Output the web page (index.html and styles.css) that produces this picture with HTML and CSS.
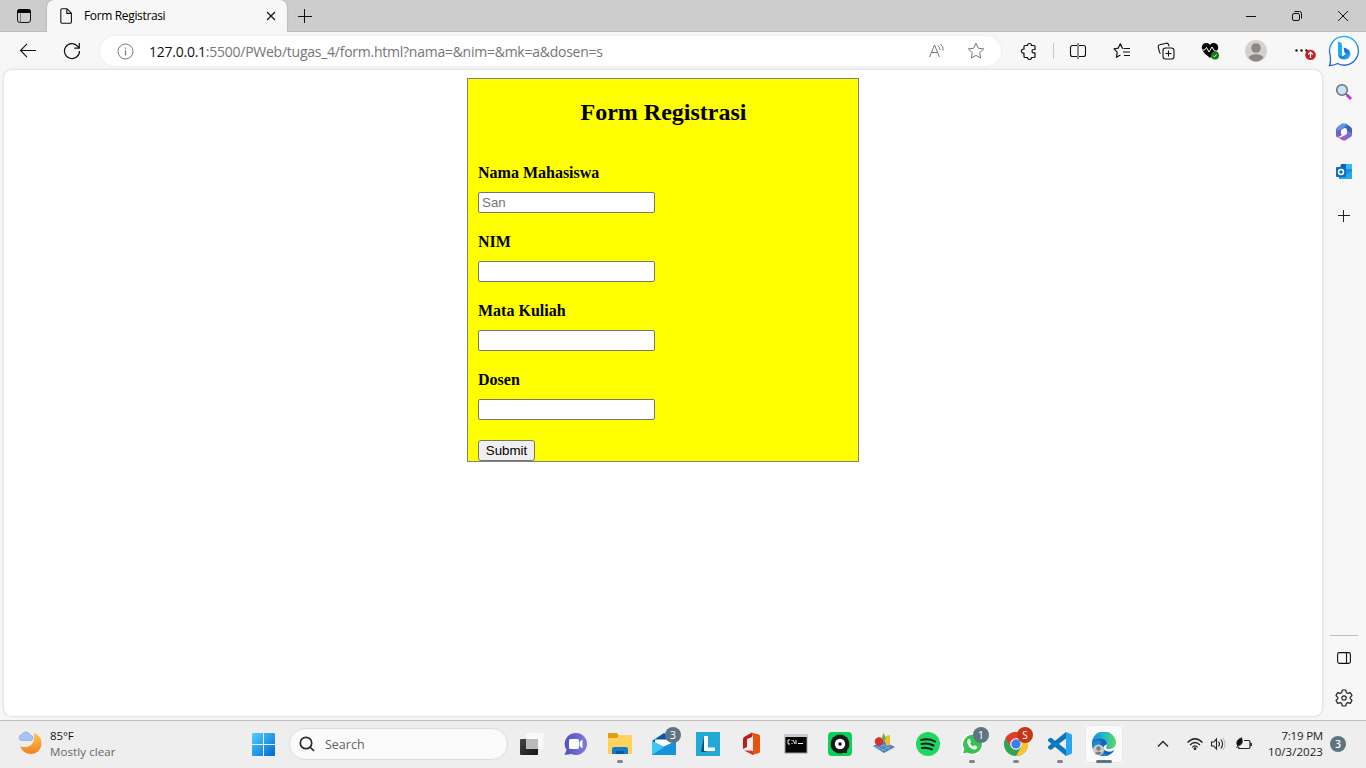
FILE: index.html
```html
<!DOCTYPE html>
<html lang="en">
<head>
<meta charset="utf-8">
<title>Form Registrasi</title>
<link rel="stylesheet" href="styles.css">
</head>
<body>
<div class="desktop">
  <header class="titlebar">
    <div class="workspace"><svg width="16" height="16" viewBox="0 0 16 16"><rect x="1.500" y="1.500" width="13" height="13" rx="2.500" fill="none" stroke="#111"/><path d="M1 5V4a3 3 0 0 1 3-3h8a3 3 0 0 1 3 3v1z"/><path d="M4.500 5v9.500" stroke="#777"/></svg></div>
    <div class="tab">
      <svg width="14" height="16" viewBox="0 0 14 16" fill="none" stroke="#111" stroke-width="1.100"><path d="M3 .8h5l4.400 4.400V14a1.200 1.200 0 0 1-1.200 1.200H3A1.200 1.200 0 0 1 1.800 14V2A1.200 1.200 0 0 1 3 .8zM7.800.8v4.600h4.600"/></svg>
      <span class="tab-title">Form Registrasi</span>
      <svg class="tab-close" width="10" height="10" viewBox="0 0 10 10" stroke="#111" stroke-width="1.200"><path d="M1 1l8 8M9 1L1 9"/></svg>
    </div>
    <svg class="new-tab" width="14" height="14" viewBox="0 0 14 14" stroke="#111"><path d="M0 7.500h14M6.500 0v14"/></svg>
    <div class="window-buttons">
      <svg width="12" height="12" viewBox="0 0 12 12" stroke="#111"><path d="M1 6.500h10"/></svg>
      <svg width="12" height="12" viewBox="0 0 12 12" stroke="#111" fill="none"><rect x="1.500" y="3.500" width="7" height="7" rx="1.500"/><path d="M3.500 1.500h5a2 2 0 0 1 2 2v5"/></svg>
      <svg width="12" height="12" viewBox="0 0 12 12" stroke="#111"><path d="M1 1l10 10M11 1L1 11"/></svg>
    </div>
  </header>

  <div class="browser">
    <div class="main">
      <nav class="toolbar">
        <div class="tool"><svg width="18" height="16" viewBox="0 0 18 16" fill="none" stroke="#111" stroke-width="1.100"><path d="M8 .8L1.500 7.500 8 14.200M1.500 7.500H17"/></svg></div>
        <div class="tool"><svg width="18" height="18" viewBox="0 0 18 18" fill="none" stroke="#111" stroke-width="1.200"><path d="M16.500 9A7.500 7.500 0 1 1 14.800 4.300L16 6M16.300 1v5.200h-5"/></svg></div>
        <div class="address">
          <svg width="17" height="17" viewBox="0 0 17 17" fill="none" stroke="#777"><circle cx="8.500" cy="8.500" r="7.500"/><path d="M8.500 7.500v5M8.500 4.500v1.300" stroke-width="1.200"/></svg>
          <span class="url"><b>127.0.0.1</b>:5500/PWeb/tugas_4/form.html?nama=&amp;nim=&amp;mk=a&amp;dosen=s</span>
          <svg class="read" width="17" height="16" viewBox="0 0 17 16" fill="none" stroke="#777"><path d="M1.500 14L6.500 2l5 12M3.200 9.500h6.600M10 2.500q2 1.500 2 4.500M12.500 1q3.300 2.500 2.500 6.500"/></svg>
          <svg width="18" height="18" viewBox="0 0 18 18" fill="none" stroke="#777" stroke-linejoin="round"><path d="M9 1.300l2.300 4.900 5.400.7-4 3.700 1 5.400L9 13.400 4.300 16l1-5.400-4-3.700 5.400-.7z"/></svg>
        </div>
        <div class="tool ext"><svg width="18" height="18" viewBox="0 0 18 18" fill="none" stroke="#111" stroke-width="1.200" stroke-linejoin="round"><path d="M5 3.500h2.500a2 2 0 0 1 4 0h2.500a1 1 0 0 1 1 1v3h-1.300a1.700 1.700 0 0 0 0 3.400h1.300v3.600a1 1 0 0 1-1 1h-2.500a2 2 0 0 1-4 0H5a1 1 0 0 1-1-1v-3.300h-.6a2 2 0 0 1 0-4H4v-2.700a1 1 0 0 1 1-1z"/></svg></div>
        <i class="divider"></i>
        <div class="tool"><svg width="18" height="16" viewBox="0 0 18 16" fill="none" stroke="#111" stroke-width="1.100"><path d="M8 2.500H3.500a2 2 0 0 0-2 2v7a2 2 0 0 0 2 2H8M10 2.500h4.500a2 2 0 0 1 2 2v7a2 2 0 0 1-2 2H10"/><path d="M9 0v16" stroke="#555" stroke-width="1.300"/></svg></div>
        <div class="tool"><svg width="18" height="18" viewBox="0 0 18 18" fill="none" stroke="#111" stroke-width="1.200" stroke-linejoin="round"><path d="M10 6.200H9.400L7.300 1.800 5.200 6.200l-4.200.7 3.200 3.200-.8 5.200 4-2.300M10.500 6.500h6.500M10 10h7M11 13.500h6"/></svg></div>
        <div class="tool"><svg width="18" height="18" viewBox="0 0 18 18" fill="none" stroke="#111" stroke-width="1.100"><rect x="6" y="6" width="11" height="11" rx="2.500"/><path d="M11.500 8.500v6M8.500 11.500h6M3.600 11.500A2 2 0 0 1 2.500 10L1.200 5A2 2 0 0 1 2.700 2.800l6.500-1.600a2 2 0 0 1 2.300 1.300l.6 1.800"/></svg></div>
        <div class="tool"><svg width="18" height="18" viewBox="0 0 18 18"><path d="M9 3C7 0 2 .5 1 4c-1.300 5 4 8.500 8 12 4-3.500 9.300-7 8-12-1-3.500-6-4-8-1z" fill="#080808"/><path d="M0 8h3.500l2-2.500L8 10l3-5 2.500 4H18" fill="none" stroke="#fff" stroke-width="1"/><circle cx="14" cy="13.500" r="4" fill="#107c10"/><path d="M12.300 13.700l1.200 1.200 2.200-2.600" stroke="#d7f3d7" fill="none"/></svg></div>
        <div class="tool profile"><svg width="22" height="22" viewBox="0 0 22 22"><circle cx="11" cy="11" r="11" fill="#d3d0cd"/><circle cx="11" cy="8" r="4.800" fill="#8b8784"/><path d="M3.500 18q1.500-3.700 7.500-3.700t7.500 3.700Q11 25 3.500 18z" fill="#8b8784"/></svg></div>
        <div class="tool menu"><svg width="24" height="18" viewBox="0 0 24 18"><g fill="#111"><circle cx="4.500" cy="8.500" r="1.200"/><circle cx="9.500" cy="8.500" r="1.200"/><circle cx="14.500" cy="8.500" r="1.200"/></g><circle cx="18.500" cy="13" r="5" fill="#c42126" stroke="#c42126" stroke-width=".6"/><path d="M18.500 16v-5.500M16.300 12.500l2.200-2.300 2.200 2.300" stroke="#fff" stroke-width="1.200" fill="none"/></svg></div>
      </nav>
      <main class="page">
        <form class="card">
          <h2>Form Registrasi</h2>
          <div class="field"><label>Nama Mahasiswa</label><input type="text" placeholder="San"></div>
          <div class="field"><label>NIM</label><input type="text"></div>
          <div class="field"><label>Mata Kuliah</label><input type="text"></div>
          <div class="field"><label>Dosen</label><input type="text"></div>
          <button type="button">Submit</button>
        </form>
      </main>
    </div>
    <aside class="sidebar">
      <svg class="bing" width="32" height="32" viewBox="0 0 32 32"><defs><linearGradient id="ring" x2="0" y2="1"><stop stop-color="#1cb6ee"/><stop offset="1" stop-color="#2459d6"/></linearGradient><linearGradient id="bb" x2="1" y2="1"><stop stop-color="#1b62dc"/><stop offset=".5" stop-color="#1675dc"/><stop offset="1" stop-color="#37c8ed"/></linearGradient></defs><path d="M16 1.500a14.300 14.300 0 1 1-6.500 27Q6 30.500 1.500 30.500 3 27 2.200 20A14.300 14.300 0 0 1 16 1.500z" fill="#fff" stroke="url(#ring)" stroke-width="1.400"/><path d="M10 6.500q4 .5 4 3.500v9q0 3 3 4.500-7 1-7-5z" fill="#20aeea"/><path d="M15.500 12.500q7 1.500 7 6.500-.5 5.500-6.500 5.500-5 0-6-5 2 3 5 1.500l3-2-1.500-1.500z" fill="url(#bb)"/></svg>
      <svg class="find" width="18" height="18" viewBox="0 0 18 18"><path d="M11 11l2 2" stroke="#777" stroke-width="2"/><path d="M12 12l4 4" stroke="#c136df" stroke-width="3"/><circle cx="7" cy="7" r="5.300" fill="#c4e5f7" stroke="#6c6c70" stroke-width="1.500"/></svg>
      <svg class="m365" width="18" height="18" viewBox="0 0 18 18"><path d="M8 .5L3 3.500Q1 5 1 7v5q0 2 1.500 2.500L7 12l-1-1V7l4-2.500z" fill="#6b62cf"/><path d="M7 .7h4l4.500 3q1.500 1 1.500 2.800V11l-5-3V6L6 3z" fill="#3a63b5"/><path d="M7 .7L3 3.500 2 8l4-2 5-3V.8z" fill="#5b9de4"/><path d="M1.500 13.500l5.500 3.400q2 1 4 0l5-3.200q1-1 1-3L12 8v3l-5 2.800q-3 1.500-5.500-.3z" fill="#a35cca"/><path d="M12 7.500l4.700 2.500q.5 3-2.700 4.800l-4-2.800 2-1z" fill="#6774d8"/><path d="M9 6l3 1.500v3.300L9 12.500l-3-1.700V7.500z" fill="#fff"/></svg>
      <svg class="outlook" width="17" height="17" viewBox="0 0 17 17"><path d="M5 1h11v15H3V8z" fill="#1490df"/><path d="M10 1h6v5h-6z" fill="#35b8f1"/><path d="M5 1h5v5H5z" fill="#0364b8"/><path d="M3 16L16 8v8z" fill="#28a8ea"/><rect x="0" y="4" width="10" height="10" rx="1" fill="#0f6cbd"/><circle cx="5" cy="9" r="2.500" fill="none" stroke="#fff" stroke-width="1.500"/></svg>
      <svg class="add" width="12" height="12" viewBox="0 0 12 12" stroke="#222"><path d="M0 5.500h12M5.500 0v12"/></svg>
      <i class="rule"></i>
      <svg class="panel" width="14" height="12" viewBox="0 0 14 12" fill="none" stroke="#111" stroke-width="1.100"><rect x=".6" y=".6" width="12.800" height="10.800" rx="1.800"/><path d="M9.500 1v10"/></svg>
      <svg class="gear" width="18" height="18" viewBox="0 0 18 18" fill="none" stroke="#222" stroke-width="1.200" stroke-linejoin="round"><circle cx="9" cy="9" r="2.200"/><path d="M7.300 1h3.400l.6 2.500 1.500.9 2.500-.8L17 6.500 15.200 8.300v1.400L17 11.500l-1.700 2.900-2.500-.8-1.500.9-.6 2.500H7.300l-.6-2.500-1.500-.9-2.500.8L1 11.500l1.800-1.800V8.300L1 6.500l1.700-2.900 2.500.8 1.500-.9z"/></svg>
    </aside>
  </div>

  <footer class="taskbar">
    <svg class="weather" width="24" height="24" viewBox="0 0 24 24"><defs><linearGradient id="moon" x2="0" y2="1"><stop stop-color="#fbc947"/><stop offset="1" stop-color="#f08024"/></linearGradient></defs><path d="M16 2a11 11 0 0 1 7.500 10c0 7-5 11-10.500 11-5 0-9-3-11-7.500q8 2 12-2.500c3-4 2-7 2-11z" fill="url(#moon)"/><path d="M3.500 9.500a3 3 0 0 1 0-5.800Q5 1 8 1t4 3q3 .5 3 3t-3 2.500z" fill="#a9c3f3" stroke="#83a5e5" stroke-width=".7"/></svg>
    <div class="temp"><b>85°F</b><span>Mostly clear</span></div>
    <svg class="start" width="23" height="23" viewBox="0 0 23 23"><defs><linearGradient id="win" gradientUnits="userSpaceOnUse" x2="23" y2="23"><stop stop-color="#4fd1ff"/><stop offset="1" stop-color="#0069cf"/></linearGradient></defs><path d="M1 0h10v11H0V1a1 1 0 0 1 1-1zM12 0h10a1 1 0 0 1 1 1v10H12zM0 12h11v11H1a1 1 0 0 1-1-1zM12 12h11v10a1 1 0 0 1-1 1H12z" fill="url(#win)"/></svg>
    <div class="search"><svg width="16" height="16" viewBox="0 0 16 16" fill="none" stroke="#2a2a2a" stroke-width="1.700"><circle cx="7" cy="7" r="5.700"/><path d="M11 11l4 4"/></svg><span>Search</span></div>
    <div class="apps">
      <div class="app"><svg viewBox="0 0 24 24"><defs><linearGradient id="dark" x2="1" y2="1"><stop stop-color="#444"/><stop offset="1" stop-color="#151515"/></linearGradient></defs><rect x="0" y="7" width="18" height="16" rx="1" fill="url(#dark)"/><rect x="6" y="1" width="17.500" height="16" rx="1" fill="#fafafa"/><path d="M6 7h12v10H6z" fill="#bababa"/></svg></div>
      <div class="app"><svg viewBox="0 0 24 24"><defs><linearGradient id="chat" x2="1"><stop stop-color="#4d52bb"/><stop offset="1" stop-color="#827be0"/></linearGradient></defs><path d="M11.500 1a11 11 0 1 1-4 21L.5 23l2-5A11 11 0 0 1 11.500 1z" fill="url(#chat)"/><rect x="5" y="7" width="10" height="10" rx="1.500" fill="#fff"/><path d="M15.500 10l3-2.500v9l-3-2.500z" fill="#fff"/></svg></div>
      <div class="app on"><svg viewBox="0 0 24 24"><path d="M0 2q0-1 1-1h8l2 3v5H0z" fill="#dfa00e"/><path d="M0 6h9l2-3h12q1 0 1 1v18H0z" fill="#ffd35b"/><path d="M4 22v-5q0-2 2-2h12q2 0 2 2v5z" fill="#137bcc"/><path d="M8 19h8v3H8z" fill="#075a9f"/></svg></div>
      <div class="app"><svg viewBox="0 0 24 24"><path d="M0 9l12-8 12 8v8H0z" fill="#0754a8"/><path d="M3 7.500h18V11l-9 4-9-4z" fill="#fff"/><path d="M0 9l12 6L24 9v14H0z" fill="#22a7ee"/><path d="M0 23l12-8.500L24 9v14z" fill="#1792de"/><path d="M0 9v14l12-8z" fill="#3ec6f7"/></svg><em class="badge">3</em></div>
      <div class="app"><svg viewBox="0 0 24 24"><path d="M0 0h24v24H0z" fill="#22a9d8"/><path d="M8 4L5 20h5z" fill="#104f77"/><path d="M8 4h4v11.500h7v3.500H8z" fill="#fff"/></svg></div>
      <div class="app"><svg viewBox="0 0 24 24"><path d="M12 .5L4 5q-1 1-1 2v10l4-2V7l5-2z" fill="#b32020"/><path d="M11 .5l8 2q1 .5 1 2v15q0 1-1 1.500l-7 2-1-3 2-.5V5z" fill="#e85410"/><path d="M4 18.500h7l2 .8V23z" fill="#cf382d"/></svg></div>
      <div class="app"><svg viewBox="0 0 24 24"><rect x="1" y="2.500" width="22" height="18.500" fill="#050505" stroke="#999"/><path d="M1 2h22v3H1z" fill="#c5ccd5"/><path d="M6 8H4v4h2M8 8v1M8 11v1M9 8l2 4M12 8v4M14 11.500h5" stroke="#eee" fill="none"/></svg></div>
      <div class="app"><svg viewBox="0 0 24 24"><rect width="24" height="24" rx="4" fill="#09d15b"/><circle cx="12" cy="12" r="9.500" fill="#181a19"/><path d="M14 21l5-4v4z" fill="#181a19"/><circle cx="12" cy="12" r="5.200" fill="#fff"/><circle cx="12" cy="12" r="1.700"/></svg></div>
      <div class="app"><svg viewBox="0 0 24 24"><path d="M1 14l10-5 12 6-11 6z" fill="#477dbf"/><path d="M3 14l11 5M7 12l11 5M5 17l10-6M9 19l10-5" stroke="#86afe0" stroke-width=".8"/><path d="M9 9l2.500-8 2.500 5-1 5z" fill="#65af3f"/><path d="M14 4l4-1v10l-4 1z" fill="#f3bd27"/><circle cx="7" cy="9.500" r="4.200" fill="#dc3024"/></svg></div>
      <div class="app"><svg viewBox="0 0 24 24"><circle cx="12" cy="12" r="12" fill="#1ed760"/><path d="M5 8q8-2 14 1.500M5.500 12q6.500-1.500 12 1.500M6 16q5-1 10 1.300" fill="none" stroke="#142018" stroke-width="2" stroke-linecap="round"/></svg></div>
      <div class="app on"><svg viewBox="0 0 24 24"><path d="M12 1a11 11 0 1 1-4.500 20.800L.5 23.500l2-6.500A11 11 0 0 1 12 1z" fill="#fff"/><path d="M12 2.800a9.500 9.500 0 1 1-4.500 17.700L3 21.500l1.300-4.500A9.500 9.500 0 0 1 12 2.800z" fill="#35c550"/><path d="M8 7l2 .3 1 3-1 1.200q1 2 3.200 3l1.300-1.300 3 1.500q-.5 3-3.500 2.800Q8 16 7 9.500z" fill="#fff"/></svg><em class="badge">1</em></div>
      <div class="app on"><svg viewBox="0 0 24 24"><circle cx="12" cy="12" r="12" fill="#32a350"/><path d="M1.600 6A12 12 0 0 1 22.400 6H12L7 15z" fill="#e33b30"/><path d="M22.400 6A12 12 0 0 1 12 24l5.200-9L12 6z" fill="#fcc529"/><circle cx="12" cy="12" r="5.800" fill="#fff"/><circle cx="12" cy="12" r="4.700" fill="#397eeb"/></svg><em class="badge red">S</em></div>
      <div class="app on"><svg viewBox="0 0 24 24"><path d="M18 0v6.500L3.500 17.500q-1 .7-1.800 0L0 16v-1.500z" fill="#1273b5"/><path d="M0 9v-1.500L1.700 6q.8-.7 1.800 0L18 17.500V24z" fill="#0879c4"/><path d="M18 0l5 2q1 .5 1 1.500v17q0 1-1 1.500l-5 2z" fill="#29a6ef"/></svg></div>
      <div class="app on active"><svg viewBox="0 0 24 24"><defs><linearGradient id="edge" x2="1"><stop stop-color="#168dcc"/><stop offset=".5" stop-color="#22b9ce"/><stop offset="1" stop-color="#62d957"/></linearGradient></defs><path d="M0 12A12 12 0 0 1 24 10.500c0 5-4 6.500-7.500 6.500-2.500 0-3-1-2-2.500C16 11 13 9 9 9c-5 0-8 1.500-9 3z" fill="url(#edge)"/><path d="M0 12C1 8 5 6.500 9 6.800c4 .2 6 3 6 5.700-5 1-5 6 1 7 3 .5 5-.5 6.500-1.500C20 22 16.500 24 12 24A12 12 0 0 1 0 12z" fill="#1565b7"/><path d="M0 12C2 8 7 7 10 10c-4 4-1 11 5 12.500Q14 24 12 24A12 12 0 0 1 0 12z" fill="#168bd1"/><circle cx="6.500" cy="18" r="5.500" fill="#d0cdca"/><circle cx="6.500" cy="16.500" r="2.300" fill="#807d7a"/><path d="M3 21q3.500-3 7 0-3.500 3.500-7 0z" fill="#807d7a"/></svg></div>
    </div>
    <svg class="chevron" width="12" height="8" viewBox="0 0 12 8" fill="none" stroke="#222" stroke-width="1.300"><path d="M1 6.500l5-5 5 5"/></svg>
    <svg class="wifi" width="18" height="14" viewBox="0 0 18 14" fill="none" stroke="#222" stroke-width="1.200"><path d="M1.500 5.500q7.500-7.500 15 0M4 8q5-5 10 0M6.300 10.300q2.700-2.700 5.400 0"/><circle cx="9" cy="11.700" r=".8" fill="#222"/></svg>
    <svg class="sound" width="18" height="14" viewBox="0 0 18 14" fill="none" stroke="#222" stroke-width="1.100"><path d="M1.500 5h2.300L6.500 2v10L3.800 9H1.500zM8.500 4.500q2 2.500 0 5M10.800 2.500q3.500 4.500 0 9"/><path d="M13 1q4 6 0 12" stroke="#bbb"/></svg>
    <svg class="battery" width="18" height="14" viewBox="0 0 18 14" fill="none" stroke="#222" stroke-width="1.200"><path d="M9 3.500h4.500A1.500 1.500 0 0 1 15 5v5a1.500 1.500 0 0 1-1.500 1.500H5.500Q3 11.500 3 9.500M16.300 6v3"/><path d="M6.500.8C2 2.500.8 5.500 2.500 8.500 6.500 9 8.500 5.500 6.500.8zM3 8l-1.500 3" fill="#111" stroke-width=".8"/></svg>
    <div class="clock"><span>7:19 PM</span><span>10/3/2023</span></div>
    <em class="count">3</em>
  </footer>
</div>
</body>
</html>
```

FILE: styles.css
```css
* { box-sizing: border-box; }
body { margin: 0; font-family: "Open Sans", "Noto Sans", sans-serif; }
svg { display: block; flex: none; }
em { font-style: normal; }
b { font-weight: 400; }

.desktop { display: flex; flex-direction: column; width: 1366px; height: 768px; overflow: hidden; background: #f7f7f7; }

.titlebar { display: flex; align-items: center; height: 32px; background: #cdcdcd; box-shadow: inset 0 -1px #bdbdbd; }
.workspace { display: flex; justify-content: center; width: 47px; }
.tab { display: flex; align-items: center; width: 240px; height: 32px; padding: 0 11px 0 12px; background: #f7f7f7; border-radius: 7px 7px 0 0; box-shadow: 0 0 2px #999; clip-path: inset(-3px -3px 0 -3px); }
.tab-title { margin-left: 11px; font-size: 12px; line-height: 16px; letter-spacing: -.35px; white-space: nowrap; padding-bottom: 1px; }
.tab-close { margin-left: auto; }
.new-tab { margin-left: 11px; }
.window-buttons { display: flex; gap: 34px; margin-left: auto; padding-right: 17px; }

.browser { display: flex; height: 688px; }
.main { display: flex; flex-direction: column; width: 1322px; }
.toolbar { display: flex; align-items: center; height: 38px; padding-left: 6px; }
.tool { display: flex; justify-content: center; flex: none; width: 44px; }
.tool.ext { margin-left: 6px; }
.tool.profile { width: 48px; }
.tool.menu { width: 42px; padding-left: 6px; }
.divider { flex: none; width: 1px; height: 16px; margin: 0 2px; background: #c9c9c9; }
.address { display: flex; align-items: center; flex: none; width: 901px; height: 30px; margin-left: 6px; padding: 0 16px 0 17px; background: #fff; border-radius: 15px; box-shadow: 0 0 3px #e6e6e6; }
.url { margin-left: 15px; color: #757575; font-size: 14px; letter-spacing: -.25px; white-space: nowrap; }
.url b { color: #111; }
.read { margin: 0 22px 0 auto; }
.page { height: 646px; margin-left: 4px; padding-top: 8px; background: #fff; border-radius: 8px; box-shadow: 0 0 3px #c4c4c4; }

.card { display: flex; flex-direction: column; gap: 20px; width: 392px; height: 384px; margin-left: 463px; padding: 20px 10px 0; background: #ff0; border: 1px solid #808080; color: #000; }
.card h2 { margin: 0 0 18px; padding-left: 1px; font: bold 24px/27px "Liberation Serif", "Times New Roman", serif; text-align: center; }
.field { display: flex; flex-direction: column; gap: 10px; }
.field label { font: bold 16px/18px "Liberation Serif", "Times New Roman", serif; }
.field input { width: 177px; height: 21px; padding: 1px 3px; background: #fff; border: 1px solid #767676; border-radius: 2px; font: 13.333px "Liberation Sans", Arial, sans-serif; }
.card button { flex: none; width: 57px; height: 21px; padding: 0; background: #efefef; border: 1px solid #767676; border-radius: 3px; color: #000; font: 13.333px "Liberation Sans", Arial, sans-serif; }

.sidebar { display: flex; flex-direction: column; align-items: center; width: 44px; padding-top: 3px; }
.find { margin-top: 16px; }
.m365 { margin-top: 22px; }
.outlook { margin-top: 22px; }
.add { margin-top: 30px; }
.rule { width: 28px; height: 1px; margin-top: 413px; background: #bcbcbc; }
.panel { margin-top: 16px; }
.gear { margin-top: 25px; }

.taskbar { display: flex; align-items: center; height: 48px; background: #eee; box-shadow: inset 0 1px #bebebe; }
.weather { margin: -3px 0 0 18px; }
.temp { display: flex; flex-direction: column; width: 202px; margin-left: 8px; color: #666; font-size: 11.500px; line-height: 16px; letter-spacing: .1px; }
.temp b { color: #111; letter-spacing: -.1px; }
.search { display: flex; align-items: center; gap: 10px; width: 219px; height: 32px; margin-left: 14px; padding-left: 9px; background: #fbfbfb; border: 1px solid #ddd; border-radius: 16px; color: #606060; font-size: 12.500px; }
.apps { display: flex; margin-left: 2px; }
.app { position: relative; display: flex; align-items: center; justify-content: center; width: 44px; height: 48px; }
.app svg { width: 24px; height: 24px; }
.app.on::after { content: ""; position: absolute; left: 19px; bottom: 5px; width: 6px; height: 3px; border-radius: 2px; background: #858585; }
.app.active { background: linear-gradient(#fafafa, #fafafa) center / 38px 38px no-repeat; }
.app.active::before { content: ""; position: absolute; inset: 5px 3px; border: 1px solid #e5e5e5; border-radius: 4px; }
.app.active::after { left: 14px; width: 16px; background: #5d7583; }
.badge { position: absolute; top: 7px; left: 23px; width: 16px; height: 16px; border-radius: 50%; background: #5d7583; color: #fff; font-size: 11px; line-height: 16px; text-align: center; }
.badge.red { background: #c43614; font-size: 10px; }
.chevron { margin-left: 31px; }
.wifi { margin-left: 17px; }
.sound { margin-left: 6px; }
.battery { margin-left: 7px; }
.clock { display: flex; flex-direction: column; width: 70px; color: #222; font-size: 11.500px; line-height: 16px; text-align: right; }
.clock span:first-child { letter-spacing: -.2px; }
.clock span:last-child { letter-spacing: .05px; }
.count { width: 16px; height: 16px; margin-left: 7px; border-radius: 50%; background: #5d7583; color: #fff; font-size: 10px; font-weight: 600; line-height: 16px; text-align: center; }
```
